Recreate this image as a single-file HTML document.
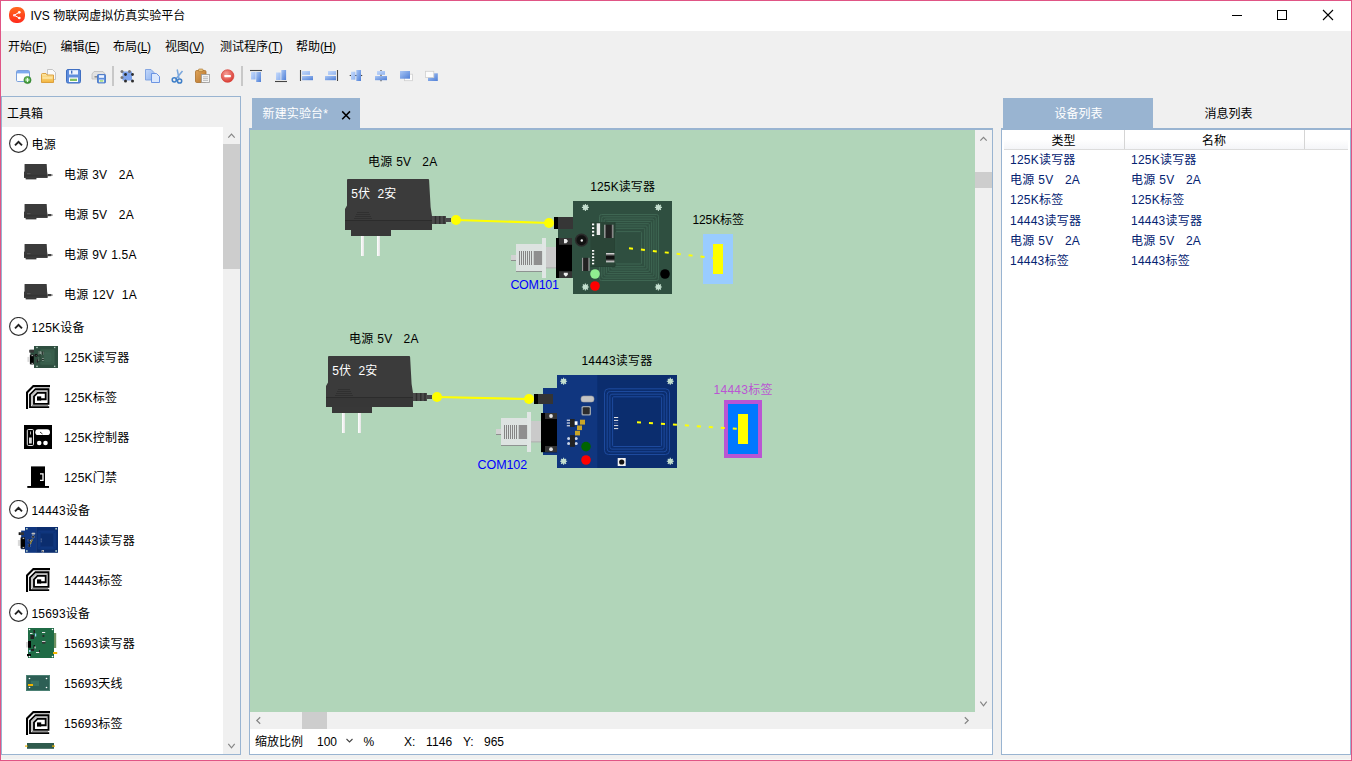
<!DOCTYPE html>
<html lang="zh-CN">
<head>
<meta charset="utf-8">
<title>IVS 物联网虚拟仿真实验平台</title>
<style>
html,body{margin:0;padding:0;}
body{width:1352px;height:761px;overflow:hidden;position:relative;background:#f0f0f0;
  font-family:"Liberation Sans","Noto Sans CJK SC",sans-serif;font-size:12px;color:#000;}
.abs{position:absolute;}
.t{position:absolute;white-space:pre;line-height:16px;height:16px;}
#frame{position:absolute;left:0;top:0;width:1350px;height:759px;border:1px solid #e05585;z-index:50;pointer-events:none;}
#titlebar{position:absolute;left:1px;top:1px;width:1350px;height:30px;background:#fff;}
.menu .k{letter-spacing:-.35px;}
.menu u{text-decoration:underline;text-underline-offset:1px;}
.sep{position:absolute;top:66px;width:2px;height:20px;background:#c8c8c8;}
.panel{position:absolute;border:1px solid #99b4d1;box-sizing:border-box;background:#f0f0f0;}
.hdr{position:absolute;white-space:pre;line-height:23px;height:23px;left:33px;margin-top:3px;letter-spacing:.2px;}
.item{position:absolute;white-space:pre;line-height:40px;height:40px;left:64px;margin-top:1px;letter-spacing:.2px;word-spacing:.3px;}
.exp{position:absolute;left:9px;width:19px;height:19px;}
.ico{position:absolute;}
.row{position:absolute;white-space:pre;line-height:20px;height:20px;color:#042271;letter-spacing:.22px;word-spacing:.3px;}
</style>
</head>
<body>
<svg width="0" height="0" style="position:absolute">
<defs>
  <linearGradient id="gProng" x1="0" y1="0" x2="1" y2="0"><stop offset="0" stop-color="#fff"/><stop offset="1" stop-color="#e4e4e4"/></linearGradient>
  <linearGradient id="gCylV" x1="0" y1="0" x2="1" y2="0"><stop offset="0" stop-color="#c8c8c8"/><stop offset=".22" stop-color="#222"/><stop offset=".78" stop-color="#222"/><stop offset="1" stop-color="#c8c8c8"/></linearGradient>
  <linearGradient id="gCylH" x1="0" y1="0" x2="0" y2="1"><stop offset="0" stop-color="#f0f0f0"/><stop offset=".35" stop-color="#111"/><stop offset=".65" stop-color="#111"/><stop offset="1" stop-color="#f0f0f0"/></linearGradient>
  <!-- power adapter, drawn in page coords of first instance (origin 345,179) -->
  <g id="prongs"><rect x="361" y="235" width="3" height="21" fill="url(#gProng)"/><rect x="377" y="235" width="3" height="21" fill="url(#gProng)"/></g>
  <g id="adapter">
    <rect x="351" y="229" width="40" height="7" fill="#383838"/>
    <path d="M348 179H428.2Q429 179 429.1 180L430.6 207L432 216V230H345V209L347 205.5V180Q347 179 348 179Z" fill="#3b3b3b"/>
    <path d="M345 220H432V230H345Z" fill="#373737"/>
    <path d="M345 220.5H432" stroke="#2c2c2c" stroke-width="1"/>
    <path d="M357 212.5H369M356 214.5H370M355 216.5H371M354 218.5H372" stroke="#303030" stroke-width="1"/>
    <rect x="432" y="216" width="14" height="8" fill="#4a4a4a"/>
    <path d="M435.5 216V224M439.8 216V224M444 216V224" stroke="#2e2e2e" stroke-width="1.4"/>
    <rect x="446" y="218" width="5" height="4" fill="#4a4a4a"/>
  </g>
  <!-- DB9 serial plug (gray), first instance page coords -->
  <g id="db9">
    <rect x="511" y="255" width="5" height="6" fill="#d2d2d2"/><rect x="511" y="260" width="5" height="1" fill="#8e8e8e"/>
    <rect x="516" y="244" width="26.5" height="28" fill="#dde3e1"/><rect x="516" y="271" width="26" height="1" fill="#8e9391"/>
    <rect x="542" y="238" width="4" height="40" fill="#e0e6e4"/>
    <rect x="546" y="247" width="10" height="21.200" fill="#cacaca"/><rect x="546" y="267.500" width="10" height=".8" fill="#a5a5a5"/>
    <path d="M519.5 251V265M521.5 251V265M523.5 251V265M525.5 251V265M527.5 251V265M529.5 251V265M531.5 251V265" stroke="#858585" stroke-width="1"/>
    <rect x="533.700" y="251" width="8.400" height="14" fill="#8f8f8f"/>
  </g>
  <!-- screw hole -->
  <g id="hole"><circle r="2.5" fill="#c4dfcf"/><path d="M-3.5 0H3.5M0 -3.5V3.5M-2.5 -2.5L2.5 2.5M-2.5 2.5L2.5 -2.5" stroke="#c4dfcf" stroke-width="1.1"/></g>
  <!-- 125K reader (board + jack + black DB9 socket), first instance page coords -->
  <g id="r125">
    <rect x="558" y="217" width="16" height="61" fill="#2f4f40"/>
    <rect x="573" y="201" width="99" height="93" fill="#2f4f40"/>
    <rect x="554" y="217" width="4.5" height="12" fill="#000"/>
    <rect x="558" y="217" width="15" height="12" fill="#363636"/>
    <rect x="556" y="238" width="16" height="40" fill="#000"/>
    <rect x="559" y="238" width="13" height="6.800" fill="#343434"/>
    <rect x="559" y="271.200" width="13" height="6.800" fill="#343434"/>
    <path d="M564 239H566.300L568 241.100L566.300 243.200H564Z" fill="#ececec"/>
    <path d="M563.800 272.700H567.800V274.800L565.800 276.800L563.800 274.800Z" fill="#ececec"/>
    <g fill="none" stroke="#3e6652" stroke-width="1">
      <rect x="599.5" y="214.5" width="59" height="66" rx="2"/>
      <rect x="601.8" y="216.8" width="54.4" height="61.4" rx="1.5"/>
      <rect x="604.1" y="219.1" width="49.8" height="56.8" rx="1.5"/>
      <rect x="606.4" y="221.4" width="45.2" height="52.2" rx="1"/>
      <rect x="608.7" y="223.7" width="40.6" height="47.6" rx="1"/>
      <rect x="611" y="226" width="36" height="43" rx="1"/>
      <rect x="613.3" y="228.3" width="31.4" height="38.4" rx="1"/>
      <rect x="615.6" y="231.6" width="26" height="32.4" rx="1"/>
    </g>
    <rect x="590.5" y="222" width="24.5" height="44.5" fill="#2a4537"/>
    <path d="M590.5 266.5H615V222" stroke="#254033" stroke-width="1" fill="none"/>
    <g fill="#fff"><rect x="592" y="223.5" width="2.2" height="1.8"/><rect x="592" y="227.2" width="2.2" height="1.8"/><rect x="592" y="230.8" width="2.2" height="1.8"/><rect x="592" y="234.3" width="2.2" height="1.8"/>
      <rect x="592" y="250" width="2.2" height="1.6"/><rect x="592" y="253.2" width="2.2" height="1.6"/><rect x="592" y="256.4" width="2.2" height="1.6"/><rect x="592" y="259.6" width="2.2" height="1.6"/><rect x="592" y="262.8" width="2.2" height="1.6"/></g>
    <rect x="596.7" y="223.3" width="3.4" height="11.7" fill="#e9e9e9"/>
    <rect x="604.3" y="224.7" width="9" height="13.3" fill="url(#gCylV)"/>
    <rect x="606" y="253" width="8.4" height="9.3" fill="url(#gCylH)"/>
    <rect x="582" y="257.8" width="7.4" height="13.2" fill="url(#gCylV)"/>
    <circle cx="581.5" cy="240.2" r="6.6" fill="#2b2b2b"/><circle cx="581.5" cy="240.2" r="5" fill="#111"/><circle cx="581.8" cy="240.5" r="1.2" fill="#f4f4f4"/>
    <use href="#hole" x="585.4" y="207.4"/><use href="#hole" x="658.4" y="207.4"/><use href="#hole" x="585.4" y="287"/><use href="#hole" x="658.4" y="287"/>
  </g>
  <!-- 14443 reader, page coords -->
  <g id="r14443">
    <rect x="543" y="388" width="15" height="67" fill="#10367f"/>
    <rect x="557" y="375" width="41" height="93" fill="#10367f"/>
    <rect x="597.3" y="375" width="79.7" height="93" fill="#0b2d6e"/>
    <rect x="534" y="394" width="4.5" height="10" fill="#000"/>
    <rect x="538" y="394" width="15" height="10" fill="#343434"/>
    <rect x="541" y="413" width="16" height="39.2" fill="#000"/>
    <rect x="545" y="413" width="12" height="6" fill="#343434"/>
    <rect x="545" y="446" width="12" height="6.200" fill="#343434"/>
    <circle cx="551" cy="416" r="1.900" fill="#e4e4e4"/><circle cx="551" cy="449.200" r="1.900" fill="#e4e4e4"/>
    <g fill="none" stroke="#1d4a9e" stroke-width="1">
      <rect x="604.5" y="388.8" width="65" height="65.7" rx="4"/>
      <rect x="607.2" y="391.5" width="59.6" height="60.3" rx="3"/>
      <rect x="609.9" y="394.2" width="54.2" height="54.9" rx="2"/>
      <rect x="612.6" y="396.8" width="49" height="49.7" rx="1"/>
    </g>
    <path d="M614 417.5H618.2M614 420.4H618.2M614 425.6H618.2M614 428.6H618.2" stroke="#e6e6e6" stroke-width="1"/><path d="M614 423H618.2" stroke="#4c69a6" stroke-width="1"/>
    <rect x="581" y="396" width="13" height="6" rx="2.6" fill="#c4c4c4" stroke="#9d9d9d" stroke-width=".6"/>
    <rect x="581.5" y="406" width="9.5" height="9.5" rx="1.6" fill="#9aa3ad"/><rect x="582.8" y="407.3" width="6.9" height="6.9" rx="1" fill="#2c2c2c"/>
    <path d="M566.8 420.2H570.5M566.8 423H570.5M566.8 425.8H570.5" stroke="#fff" stroke-width="1"/>
    <rect x="570" y="419" width="4.7" height="8" fill="#222"/><rect x="574.7" y="421.3" width="2.8" height="3.6" fill="#fff"/>
    <g fill="#c8a428"><rect x="580" y="419.7" width="5" height="4.9"/><rect x="577" y="425.5" width="5" height="4.6"/><rect x="575" y="430.8" width="5" height="4.6"/></g>
    <rect x="570" y="435.3" width="4.7" height="11.3" fill="#222"/>
    <g fill="#c9d3e6"><circle cx="568.6" cy="438.5" r="1.5"/><circle cx="576.2" cy="438.5" r="1.5"/><circle cx="568.6" cy="443.6" r="1.5"/><circle cx="576.2" cy="443.6" r="1.5"/></g>
    <rect x="570" y="435.3" width="4.7" height="11.3" fill="#222"/>
    <rect x="617.7" y="458" width="8" height="8" fill="#f2f2f2"/><circle cx="621.7" cy="462" r="2.6" fill="#111"/>
    <use href="#hole" x="563.6" y="381.3"/><use href="#hole" x="670.3" y="381.3"/><use href="#hole" x="563.6" y="461.3"/><use href="#hole" x="670.3" y="461.3"/>
  </g>
  <!-- RFID tag icon 24x24 -->
  <g id="tagico" fill="none" stroke="#000">
    <path d="M24 1.1H7.4L1 7.5V24" stroke-width="2.1"/>
    <path d="M21.5 6.1H10.3L6 10.4V20.5H22" stroke="#909090" stroke-width="1"/>
    <path d="M23.2 22.1H4V9.6L9.5 4.2H22.5V18.9H8V11.3L11.4 7.9H19.7V14.2H14" stroke-width="1.85"/>
    <rect x="11" y="11.4" width="4.2" height="4.2" fill="#000" stroke="none"/>
  </g>
</defs>
</svg>

<!-- ===== title bar ===== -->
<div id="titlebar"></div>
<svg class="abs" style="left:8px;top:6px" width="18" height="18" viewBox="0 0 18 18">
  <defs><linearGradient id="lg" x1="0" y1="0" x2="0" y2="1"><stop offset="0" stop-color="#ff6a1e"/><stop offset="1" stop-color="#ff2a1c"/></linearGradient></defs>
  <rect x="1" y="1" width="16" height="16" rx="7" fill="url(#lg)"/>
  <path d="M6.2 9.2 L11.2 6.4 M6.2 9.2 L11.2 12" stroke="#fff" stroke-width="1" fill="none"/>
  <circle cx="6.300" cy="9.200" r="1.300" fill="#fde0f0"/><circle cx="11.300" cy="6.300" r="1.350" fill="#fff"/><circle cx="11.300" cy="12" r="1.350" fill="#fff"/>
</svg>
<div class="t" style="left:30.500px;top:8px;">IVS 物联网虚拟仿真实验平台</div>
<svg class="abs" style="left:1220px;top:1px" width="131" height="30" viewBox="1220 1 131 30">
  <path d="M1232 15.5H1242" stroke="#000" stroke-width="1"/>
  <rect x="1277.5" y="10.5" width="9" height="9" fill="none" stroke="#000" stroke-width="1"/>
  <path d="M1323 10L1333 20M1333 10L1323 20" stroke="#000" stroke-width="1.1"/>
</svg>

<!-- ===== menu ===== -->
<div class="menu">
<div class="t" style="left:8px;top:39px;">开始<span class="k">(<u>F</u>)</span></div>
<div class="t" style="left:60.5px;top:39px;">编辑<span class="k">(<u>E</u>)</span></div>
<div class="t" style="left:113px;top:39px;">布局<span class="k">(<u>L</u>)</span></div>
<div class="t" style="left:165px;top:39px;">视图<span class="k">(<u>V</u>)</span></div>
<div class="t" style="left:220px;top:39px;">测试程序<span class="k">(<u>T</u>)</span></div>
<div class="t" style="left:296px;top:39px;">帮助<span class="k">(<u>H</u>)</span></div>
</div>

<!-- ===== toolbar ===== -->
<div class="sep" style="left:112px"></div>
<div class="sep" style="left:241px"></div>
<svg class="abs" style="left:10px;top:62px" width="440" height="28" viewBox="10 62 440 28">
<defs>
  <linearGradient id="tbB" x1="0" y1="0" x2="1" y2="1"><stop offset="0" stop-color="#a9c6f5"/><stop offset="1" stop-color="#4f7fd6"/></linearGradient>
  <linearGradient id="tbL" x1="0" y1="0" x2="1" y2="1"><stop offset="0" stop-color="#c4d9fb"/><stop offset="1" stop-color="#8fb2ee"/></linearGradient>
  <linearGradient id="tbF" x1="0" y1="0" x2="0" y2="1"><stop offset="0" stop-color="#fde9a6"/><stop offset="1" stop-color="#f3b43c"/></linearGradient>
  <linearGradient id="tbP" x1="0" y1="0" x2="1" y2="1"><stop offset="0" stop-color="#dfa45a"/><stop offset="1" stop-color="#b5742c"/></linearGradient>
  <radialGradient id="tbR" cx=".4" cy=".35" r=".7"><stop offset="0" stop-color="#f6a29a"/><stop offset="1" stop-color="#d8362e"/></radialGradient>
  <radialGradient id="tbG" cx=".4" cy=".35" r=".7"><stop offset="0" stop-color="#7fc96e"/><stop offset="1" stop-color="#2d8a2a"/></radialGradient>
</defs>
<!-- 1 new window -->
<rect x="16.5" y="70.5" width="13" height="11" rx="1.2" fill="#fbfdff" stroke="#7ba0dc"/>
<path d="M17 71H29V73.4H17Z" fill="#7eaaee"/>
<circle cx="27.5" cy="80" r="3.6" fill="url(#tbG)" stroke="#2e7d2c" stroke-width=".6"/>
<path d="M27.5 78V82M25.5 80H29.5" stroke="#eaffea" stroke-width="1.2"/>
<!-- 2 open folder -->
<path d="M47.5 69.5H52.5L55.5 72.5V79.5H47.5Z" fill="#fafafa" stroke="#b8b8b8" stroke-width=".8"/>
<path d="M41.5 74.5Q41.5 73.5 42.5 73.5H46L47 75H53.5V82.5H41.5Z" fill="url(#tbF)" stroke="#d99a34" stroke-width=".9"/>
<path d="M42.5 78H52.5" stroke="#fff3c4" stroke-width="1"/>
<!-- 3 save -->
<rect x="66.5" y="69.5" width="14" height="13.5" rx="1.5" fill="#5f8edc" stroke="#3f6fc2"/>
<rect x="69" y="70.2" width="9" height="4.3" fill="#eef4ff"/>
<rect x="71" y="70.6" width="1.4" height="3" fill="#3f6fc2"/>
<rect x="69" y="77.5" width="9" height="4.5" fill="#fff"/>
<rect x="70" y="78.7" width="7" height="2.3" fill="#7fc061"/>
<!-- 4 save as -->
<path d="M92 74L94 71.5H103L105 74V79H92Z" fill="#e2e2e2" stroke="#bdbdbd" stroke-width=".8"/>
<rect x="94.5" y="76" width="3" height="1.6" fill="#8e8e8e"/>
<rect x="97.5" y="74.5" width="8" height="8.5" rx=".8" fill="#5f8edc" stroke="#3f6fc2" stroke-width=".8"/>
<rect x="99" y="75.2" width="5" height="2.6" fill="#eef4ff"/>
<rect x="99" y="79.6" width="5" height="2.6" fill="#fff"/><rect x="99.6" y="80.3" width="3.8" height="1.3" fill="#8fd05f"/>
<!-- 5 select all -->
<rect x="122.5" y="71.5" width="9.5" height="9" fill="#7ea4ec"/>
<g fill="#2d2d2d"><circle cx="122" cy="71.5" r="1.5" fill="#777"/><circle cx="129.5" cy="71.5" r="1.5" fill="#777"/><circle cx="125.5" cy="74.5" r="1.4"/><circle cx="132.5" cy="74.5" r="1.4"/><circle cx="122" cy="77.5" r="1.5" fill="#777"/><circle cx="125.5" cy="81" r="1.5"/><circle cx="132.5" cy="81" r="1.5"/></g>
<!-- 6 copy -->
<path d="M145.5 69.5H151L154 72.500V80H145.5Z" fill="url(#tbL)" stroke="#7a9fe0" stroke-width=".9"/>
<path d="M151.5 73.5H156.500L159.5 76.5V82.5H151.5Z" fill="#dbe8fd" stroke="#5f8be0" stroke-width=".9"/>
<!-- 7 scissors -->
<path d="M177.200 69.5L179.000 78.500M182.500 71L175.500 79.5" stroke="#7aa7dd" stroke-width="1.5" fill="none"/>
<circle cx="174.300" cy="79.8" r="2.1" fill="none" stroke="#3f7fc8" stroke-width="1.5"/>
<circle cx="179.600" cy="81" r="2.1" fill="none" stroke="#3f7fc8" stroke-width="1.5"/>
<!-- 8 paste -->
<rect x="195.500" y="70.5" width="10.5" height="12" rx="1.2" fill="url(#tbP)" stroke="#a9702c" stroke-width=".8"/>
<rect x="198.5" y="69" width="4.5" height="2.6" rx=".8" fill="#e6c07a" stroke="#a9702c" stroke-width=".6"/>
<rect x="201.5" y="74.5" width="8" height="8" fill="#f4f4f4" stroke="#9a9a9a" stroke-width=".8"/>
<path d="M203 76.8H208M203 78.600H208M203 80.400H208" stroke="#b0b0b0" stroke-width=".8"/>
<!-- 9 delete -->
<circle cx="227.600" cy="76" r="6.3" fill="url(#tbR)" stroke="#d8423a" stroke-width=".7"/>
<rect x="224.300" y="74.9" width="6.600" height="2.300" rx=".6" fill="#fff"/>
<!-- 10 align top -->
<path d="M250 70.500H262" stroke="#444" stroke-width="1.1"/>
<rect x="251" y="72" width="4.600" height="7.500" fill="url(#tbL)"/><rect x="256.200" y="72" width="4.800" height="10" fill="url(#tbB)"/>
<!-- 11 align bottom -->
<path d="M275 81.500H287" stroke="#444" stroke-width="1.1"/>
<rect x="276" y="72.5" width="4.600" height="7.500" fill="url(#tbL)"/><rect x="281.300" y="70" width="4.800" height="10" fill="url(#tbB)"/>
<!-- 12 align left -->
<path d="M300.500 70V81" stroke="#444" stroke-width="1.1"/>
<rect x="302" y="71" width="8" height="3.800" fill="url(#tbL)"/><rect x="302" y="76" width="11" height="4.200" fill="url(#tbB)"/>
<!-- 13 align right -->
<path d="M337.500 70V81" stroke="#444" stroke-width="1.1"/>
<rect x="328" y="71" width="8" height="3.800" fill="url(#tbL)"/><rect x="325" y="76" width="11" height="4.200" fill="url(#tbB)"/>
<!-- 14 centre horizontal -->
<path d="M349.700 75.500H362.200" stroke="#444" stroke-width="1.1"/>
<rect x="351" y="71.700" width="4.400" height="8" fill="url(#tbL)"/><rect x="356.300" y="70" width="4.700" height="11" fill="url(#tbB)"/>
<!-- 15 centre vertical -->
<path d="M381 70V81.300" stroke="#444" stroke-width="1.1"/>
<rect x="377" y="71" width="8" height="3.800" fill="url(#tbL)"/><rect x="375" y="76" width="12" height="4.200" fill="url(#tbB)"/>
<!-- 16 bring to front -->
<rect x="404.500" y="74.200" width="8" height="6.500" fill="#fcfcfc" stroke="#cfcfcf" stroke-width=".8"/>
<rect x="400" y="71" width="10" height="7.700" fill="url(#tbB)"/>
<!-- 17 send to back -->
<rect x="428" y="73.300" width="9.800" height="7.700" fill="url(#tbB)"/>
<rect x="425.500" y="71.300" width="8.300" height="6.200" fill="#fcfcfc" stroke="#cfcfcf" stroke-width=".8"/>
</svg>


<!-- ===== left panel ===== -->
<div class="panel" id="left" style="left:1px;top:96px;width:240px;height:659px;"></div>
<div class="t" style="left:7px;top:106px;">工具箱</div>
<div class="abs" id="list" style="left:2px;top:127px;width:221px;height:627px;background:#fff;overflow:hidden;">
<svg class="exp" style="left:7px;top:6.5px" width="19" height="19" viewBox="0 0 19 19"><circle cx="9.550" cy="9.450" r="8.950" fill="#fff" stroke="#333" stroke-width="1.150"/><path d="M6 11.300L9.500 7.800L13 11.300" fill="none" stroke="#222" stroke-width="1.900"/></svg>
<div class="hdr" style="left:29.500px;top:4px;">电源</div>
<svg class="ico" style="left:20px;top:35px" width="34" height="24" viewBox="0 0 34 24"><g transform="translate(2 2) scale(.27) translate(-345 -179)"><use href="#adapter"/></g><rect x="5" y="11.200" width="3.600" height="1.100" fill="#5a5a5a"/></svg>
<div class="item" style="left:62px;top:27px;">电源 3V   2A</div>
<svg class="ico" style="left:20px;top:75px" width="34" height="24" viewBox="0 0 34 24"><g transform="translate(2 2) scale(.27) translate(-345 -179)"><use href="#adapter"/></g><rect x="5" y="11.200" width="3.600" height="1.100" fill="#5a5a5a"/></svg>
<div class="item" style="left:62px;top:67px;">电源 5V   2A</div>
<svg class="ico" style="left:20px;top:115px" width="34" height="24" viewBox="0 0 34 24"><g transform="translate(2 2) scale(.27) translate(-345 -179)"><use href="#adapter"/></g><rect x="5" y="11.200" width="3.600" height="1.100" fill="#5a5a5a"/></svg>
<div class="item" style="left:62px;top:107px;">电源 9V 1.5A</div>
<svg class="ico" style="left:20px;top:155px" width="34" height="24" viewBox="0 0 34 24"><g transform="translate(2 2) scale(.27) translate(-345 -179)"><use href="#adapter"/></g><rect x="5" y="11.200" width="3.600" height="1.100" fill="#5a5a5a"/></svg>
<div class="item" style="left:62px;top:147px;">电源 12V  1A</div>
<svg class="exp" style="left:7px;top:189.5px" width="19" height="19" viewBox="0 0 19 19"><circle cx="9.550" cy="9.450" r="8.950" fill="#fff" stroke="#333" stroke-width="1.150"/><path d="M6 11.300L9.500 7.800L13 11.300" fill="none" stroke="#222" stroke-width="1.900"/></svg>
<div class="hdr" style="left:29.500px;top:187px;">125K设备</div>
<svg class="ico" style="left:24px;top:216px" width="34" height="28" viewBox="0 0 34 28"><g transform="translate(8 3) scale(.2424 .2366) translate(-573 -201)"><use href="#r125"/><rect x="600" y="215" width="58" height="65" fill="#4a7560" opacity=".28"/><rect x="612" y="228" width="33" height="39" fill="#4a7560" opacity=".3"/><rect x="546" y="247" width="10" height="21" fill="#d9d9d9"/></g></svg>
<div class="item" style="left:62px;top:210px;">125K读写器</div>
<svg class="ico" style="left:24px;top:258px" width="24" height="24" viewBox="0 0 24 24"><use href="#tagico"/></svg>
<div class="item" style="left:62px;top:250px;">125K标签</div>
<svg class="ico" style="left:22px;top:298px" width="28" height="24" viewBox="0 0 28 24"><rect width="28" height="24" fill="#000"/><rect x="3.300" y="4.500" width="6.200" height="16" rx="1.200" fill="#000" stroke="#fff" stroke-width=".9"/><rect x="5" y="12.500" width="2.800" height="6" fill="#ddd"/><rect x="6" y="6.500" width=".9" height="3" fill="#ccc"/><rect x="11.300" y="4.300" width="14.700" height="5.800" rx="2.900" fill="#fff"/><path d="M16 7L18.500 9" stroke="#000" stroke-width=".8"/><circle cx="15.200" cy="18" r="2.300" fill="#fff"/><circle cx="21.500" cy="18" r="2.300" fill="#fff"/></svg>
<div class="item" style="left:62px;top:290px;">125K控制器</div>
<svg class="ico" style="left:25px;top:339px" width="23" height="23" viewBox="27 466 23 23"><rect x="31" y="466.400" width="14" height="20" fill="#000"/><rect x="27.300" y="486" width="21.700" height="1.900" fill="#000"/><path d="M40 473.900H43V480.400H40" fill="none" stroke="#fff" stroke-width="1.300"/></svg>
<div class="item" style="left:62px;top:330px;">125K门禁</div>
<svg class="exp" style="left:7px;top:372.5px" width="19" height="19" viewBox="0 0 19 19"><circle cx="9.550" cy="9.450" r="8.950" fill="#fff" stroke="#333" stroke-width="1.150"/><path d="M6 11.300L9.500 7.800L13 11.300" fill="none" stroke="#222" stroke-width="1.900"/></svg>
<div class="hdr" style="left:29.500px;top:370px;">14443设备</div>
<svg class="ico" style="left:14px;top:398px" width="44" height="30" viewBox="0 0 44 30"><g transform="translate(9 2) scale(.275 .2774) translate(-557 -375)"><rect x="531" y="422" width="10" height="21" fill="#d9d9d9"/><use href="#r14443"/></g></svg>
<div class="item" style="left:62px;top:393px;">14443读写器</div>
<svg class="ico" style="left:24px;top:441px" width="24" height="24" viewBox="0 0 24 24"><use href="#tagico"/></svg>
<div class="item" style="left:62px;top:433px;">14443标签</div>
<svg class="exp" style="left:7px;top:475.5px" width="19" height="19" viewBox="0 0 19 19"><circle cx="9.550" cy="9.450" r="8.950" fill="#fff" stroke="#333" stroke-width="1.150"/><path d="M6 11.300L9.500 7.800L13 11.300" fill="none" stroke="#222" stroke-width="1.900"/></svg>
<div class="hdr" style="left:29.500px;top:473px;">15693设备</div>
<svg class="ico" style="left:22px;top:499px" width="36" height="34" viewBox="24 626 36 34"><rect x="28" y="628" width="26" height="30" fill="#1f6b45"/><rect x="54" y="633" width="2.200" height="15" fill="#6f9160"/><rect x="53" y="652" width="4.200" height="2" fill="#f0b400"/><rect x="26" y="642" width="2.500" height="5.500" fill="#d8d8d8"/><rect x="28" y="641" width="3" height="6.800" fill="#000"/><rect x="27" y="654" width="4" height="2.200" fill="#000"/><g fill="#fff"><circle cx="29.500" cy="629.500" r=".8"/><circle cx="52.500" cy="629.500" r=".8"/><circle cx="29.500" cy="656.600" r=".8"/><circle cx="52.500" cy="656.600" r=".8"/></g><rect x="30.500" y="635" width="3.500" height="4" fill="#222"/><rect x="33.500" y="630" width="1.500" height="3" fill="#222"/><rect x="42" y="632" width="3.200" height="1" fill="#e8e8e8"/><rect x="42.500" y="635" width="1.800" height="2" fill="#2a2a2a"/><rect x="42" y="641" width="3.400" height="2.600" fill="#333"/><rect x="42" y="641" width="3.400" height=".8" fill="#eee"/><rect x="30" y="633" width="2.500" height="1" fill="#e8e8e8"/><rect x="35" y="633.500" width="1.200" height="3" fill="#9fd0ff"/><rect x="33.500" y="645" width="1.500" height="3.500" fill="#111"/><rect x="34.500" y="646.500" width="1" height="2" fill="#fff"/><rect x="29" y="650" width="1.500" height="2" fill="#9fd0ff"/><rect x="31" y="649" width="3" height="2" fill="#222"/><rect x="36" y="652" width="3.500" height="1" fill="#e8e8e8"/><rect x="39" y="650" width="1" height="2.500" fill="#222"/></svg>
<div class="item" style="left:62px;top:496px;">15693读写器</div>
<svg class="ico" style="left:24px;top:548px" width="24" height="16" viewBox="26 675 24 16"><rect x="26.300" y="675.300" width="23.400" height="15.400" fill="#2d5f55" stroke="#3d7a6b" stroke-width=".7"/><rect x="31" y="680.700" width="8" height="5.300" fill="#3a7163"/><rect x="28" y="684" width="5" height="2" fill="#f0b400"/><g fill="#fff"><circle cx="29.500" cy="678.500" r=".8"/><circle cx="46.500" cy="678.500" r=".8"/><circle cx="29.500" cy="687.500" r=".8"/><circle cx="46.500" cy="687.500" r=".8"/></g></svg>
<div class="item" style="left:62px;top:536px;">15693天线</div>
<svg class="ico" style="left:24px;top:584px" width="24" height="24" viewBox="0 0 24 24"><use href="#tagico"/></svg>
<div class="item" style="left:62px;top:576px;">15693标签</div>
<svg class="ico" style="left:22px;top:616px" width="32" height="8" viewBox="24 743 32 8"><rect x="27" y="743" width="27" height="5.800" fill="#2f5a4c"/><rect x="25" y="745.500" width="2.600" height="1.200" fill="#f0b400"/><rect x="52" y="745.500" width="3" height="1.200" fill="#f0b400"/></svg>
</div>
<!-- left scrollbar -->
<div class="abs" style="left:223px;top:127px;width:17px;height:627px;background:#f0f0f0;"></div>
<div class="abs" style="left:223px;top:144px;width:17px;height:125px;background:#cdcdcd;"></div>
<svg class="abs" style="left:223px;top:127px" width="17" height="627" viewBox="0 0 17 627">
  <path d="M5.300 10.600L8.500 7.200L11.700 10.600" stroke="#858585" stroke-width="1.2" fill="none"/>
  <path d="M5.300 616.900L8.500 620.900L11.700 616.900" stroke="#858585" stroke-width="1.2" fill="none"/>
</svg>

<!-- ===== centre panel ===== -->
<div class="abs" style="left:252px;top:98px;width:108px;height:30px;background:#99b4d1;"></div>
<div class="t" style="left:262.5px;top:106px;color:#fff;letter-spacing:.15px;">新建实验台*</div>
<svg class="abs" style="left:340px;top:109px" width="12" height="12" viewBox="0 0 12 12"><path d="M2.2 2.4L10 10.2M10 2.4L2.2 10.2" stroke="#000" stroke-width="1.5"/></svg>
<div class="panel" id="centre" style="left:249px;top:128px;width:744px;height:627px;border-top:2px solid #99b4d1;background:#fff;"></div>
<div class="abs" id="canvas" style="left:250px;top:130px;width:725px;height:582px;background:#b1d5b9;overflow:hidden;">
<svg class="abs" style="left:0;top:0" width="725" height="582" viewBox="250 130 725 582" font-family="'Liberation Sans','Noto Sans CJK SC',sans-serif" font-size="12">
  <!-- set 1 -->
  <use href="#prongs"/><use href="#adapter"/>
  <text x="351.2" y="198" fill="#fff" xml:space="preserve" style="white-space:pre" textLength="45.1">5伏  2安</text>
  <text x="368" y="166" xml:space="preserve" style="white-space:pre" textLength="69.2">电源 5V   2A</text>
  <use href="#db9"/>
  <use href="#r125"/>
  <circle cx="595" cy="274" r="4.8" fill="#90ee90"/><circle cx="595" cy="286" r="4.8" fill="#ff0000"/><circle cx="665" cy="274" r="4.8" fill="#000"/>
  <path d="M456 220L549 223" stroke="#ffff00" stroke-width="2.2"/>
  <circle cx="456" cy="220" r="5" fill="#ffff00"/><circle cx="549" cy="223" r="5" fill="#ffff00"/>
  <text x="590.3" y="191" textLength="64.7">125K读写器</text>
  <text x="510.4" y="289.3" fill="#0000ff" font-size="12.5" textLength="48.5">COM101</text>
  <rect x="703" y="234" width="30" height="50" fill="#99ccff"/>
  <rect x="713" y="244" width="10" height="30" fill="#ffff00"/>
  <path d="M629 248.2L718 258.6" stroke="#ffff00" stroke-width="2" stroke-dasharray="4 8"/>
  <text x="692.4" y="224" textLength="51.6">125K标签</text>
  <!-- set 2 -->
  <use href="#prongs" transform="translate(-19 177)"/><use href="#adapter" transform="translate(-19 177)"/>
  <text x="332.2" y="375" fill="#fff" xml:space="preserve" style="white-space:pre" textLength="45.1">5伏  2安</text>
  <text x="349" y="343" xml:space="preserve" style="white-space:pre" textLength="69.4">电源 5V   2A</text>
  <use href="#db9" transform="translate(-15 174)"/>
  <use href="#r14443"/>
  <circle cx="586" cy="446.6" r="4.8" fill="#006400"/><circle cx="586" cy="460" r="4.8" fill="#ff0000"/>
  <path d="M437 397L529 399" stroke="#ffff00" stroke-width="2.2"/>
  <circle cx="437" cy="397" r="5" fill="#ffff00"/><circle cx="529" cy="399" r="5" fill="#ffff00"/>
  <text x="581.5" y="365" textLength="70.7">14443读写器</text>
  <text x="477.5" y="469.3" fill="#0000ff" font-size="12.5" textLength="49.7">COM102</text>
  <rect x="724" y="400" width="38" height="58" fill="#ba55d3"/>
  <rect x="728" y="404" width="30" height="50" fill="#0078ff"/>
  <rect x="738" y="414" width="10" height="30" fill="#ffff00"/>
  <path d="M637 422.2L743 429.2" stroke="#ffff00" stroke-width="2" stroke-dasharray="4 8"/>
  <text x="713.6" y="394" fill="#ba55d3" textLength="58.8">14443标签</text>
</svg>

</div>
<!-- centre scrollbars -->
<div class="abs" style="left:975px;top:130px;width:17px;height:599px;background:#f0f0f0;"></div>
<div class="abs" style="left:250px;top:712px;width:742px;height:17px;background:#f0f0f0;"></div>
<div class="abs" style="left:975px;top:172px;width:17px;height:16px;background:#cdcdcd;"></div>
<div class="abs" style="left:302px;top:712px;width:25px;height:17px;background:#cdcdcd;"></div>
<svg class="abs" style="left:250px;top:130px" width="742" height="599" viewBox="250 130 742 599">
  <g stroke="#858585" stroke-width="1.2" fill="none">
  <path d="M980.300 140.700L983.500 137.300L986.700 140.700"/>
  <path d="M980.300 701.700L983.500 705.800L986.700 701.700"/>
  <path d="M260.200 717.300L256.800 720.500L260.200 723.700"/>
  <path d="M964.800 717.300L968.200 720.500L964.800 723.700"/>
  </g>
</svg>
<!-- status bar -->
<div class="t" style="left:255px;top:734px;">缩放比例</div>
<div class="t" style="left:317px;top:734px;">100</div>
<svg class="abs" style="left:345px;top:737px" width="9" height="8" viewBox="0 0 9 8"><path d="M1.5 2L4.5 5L7.5 2" stroke="#444" stroke-width="1.1" fill="none"/></svg>
<div class="t" style="left:363.5px;top:734px;">%</div>
<div class="t" style="left:404px;top:734px;">X:</div>
<div class="t" style="left:426px;top:734px;letter-spacing:.1px">1146</div>
<div class="t" style="left:463px;top:734px;">Y:</div>
<div class="t" style="left:484px;top:734px;">965</div>

<!-- ===== right panel ===== -->
<div class="abs" style="left:1003px;top:98px;width:150px;height:30px;background:#99b4d1;"></div>
<div class="t" style="left:1054.5px;top:106px;color:#fff;">设备列表</div>
<div class="t" style="left:1204.5px;top:106px;">消息列表</div>
<div class="panel" id="right" style="left:1001px;top:128px;width:350px;height:627px;border-top:2px solid #99b4d1;background:#fff;"></div>
<div class="abs" style="left:1004px;top:130px;width:344px;height:19px;background:linear-gradient(#fff 0%,#fff 50%,#f4f5f8 100%);border-bottom:1px solid #dcdcdc;"></div>
<div class="abs" style="left:1124px;top:130px;width:1px;height:19px;background:#d5d5d5;"></div>
<div class="abs" style="left:1304px;top:130px;width:1px;height:19px;background:#d5d5d5;"></div>
<div class="t" style="left:1051.5px;top:133px;">类型</div>
<div class="t" style="left:1202px;top:133px;">名称</div>
<div class="row" style="left:1010px;top:150.0px;">125K读写器</div><div class="row" style="left:1131px;top:150.0px;">125K读写器</div>
<div class="row" style="left:1010px;top:170.2px;">电源 5V   2A</div><div class="row" style="left:1131px;top:170.2px;">电源 5V   2A</div>
<div class="row" style="left:1010px;top:190.4px;">125K标签</div><div class="row" style="left:1131px;top:190.4px;">125K标签</div>
<div class="row" style="left:1010px;top:210.6px;">14443读写器</div><div class="row" style="left:1131px;top:210.6px;">14443读写器</div>
<div class="row" style="left:1010px;top:230.8px;">电源 5V   2A</div><div class="row" style="left:1131px;top:230.8px;">电源 5V   2A</div>
<div class="row" style="left:1010px;top:251.0px;">14443标签</div><div class="row" style="left:1131px;top:251.0px;">14443标签</div>

<div class="abs" style="left:1px;top:759px;width:1350px;height:1px;background:#f5faf8;"></div>
<div id="frame"></div>
</body>
</html>
